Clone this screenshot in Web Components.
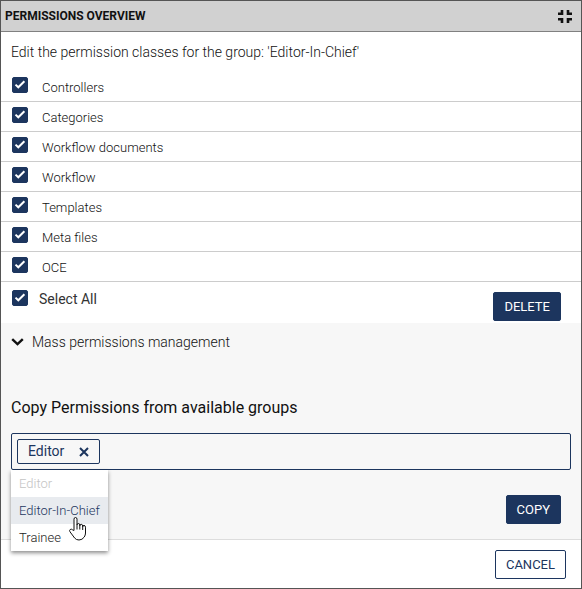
<!DOCTYPE html>
<html lang="en">
<head>
<meta charset="utf-8">
<meta name="viewport" content="width=device-width, initial-scale=1">
<title>Permissions overview</title>
<style>
  :root {
    --navy: #1c355e;
    --text: #111111;
    --line: #cccccc;
    --panel: #f7f7f7;
  }

  body {
    margin: 0;
    font-family: Roboto, "Liberation Sans", sans-serif;
    color: var(--text);
  }
</style>
</head>
<body>

<permissions-dialog heading="Permissions overview">
  <permission-list group="Editor-In-Chief"></permission-list>
  <mass-permissions></mass-permissions>
  <action-button slot="footer" variant="outline">CANCEL</action-button>
</permissions-dialog>

<script>
// Filled or outlined button
class ActionButton extends HTMLElement {
  connectedCallback() {
    this.attachShadow({ mode: 'open' });

    this.shadowRoot.innerHTML = `
      <style>
        :host {
          display: inline-flex;
        }

        button {
          height: 29px;
          padding: 0 10px;
          border: 1px solid var(--navy);
          border-radius: 2px;
          background: var(--navy);
          color: #ffffff;
          font: 400 13px/16px Roboto, "Liberation Sans", sans-serif;
          cursor: pointer;
        }

        :host([variant="outline"]) button {
          background: #ffffff;
          color: var(--navy);
        }
      </style>

      <button type="button"><slot></slot></button>
    `;
  }
}

// Tick box with its label
class CheckRow extends HTMLElement {
  connectedCallback() {
    this.attachShadow({ mode: 'open' });

    this.shadowRoot.innerHTML = `
      <style>
        :host {
          display: block;
        }

        label {
          display: flex;
          align-items: flex-start;
          gap: 14px;
          padding: 5px 11px 2px;
          cursor: pointer;
        }

        .box {
          display: grid;
          flex: none;
        }

        input, svg {
          grid-area: 1 / 1;
          width: 16px;
          height: 16px;
          margin: 0;
        }

        input {
          appearance: none;
          border: 1px solid var(--navy);
          border-radius: 2px;
          background: #ffffff;
        }

        input:checked {
          background: var(--navy);
        }

        svg {
          pointer-events: none;
          visibility: hidden;
        }

        input:checked + svg {
          visibility: visible;
        }

        .text {
          font-size: 13px;
          font-weight: 300;
          line-height: 22px;
        }

        :host([large]) label {
          gap: 11px;
          padding: 8px 11px;
        }

        :host([large]) .text {
          color: #333333;
          font-size: 14px;
          font-weight: 400;
          line-height: 18px;
        }
      </style>

      <label>
        <span class="box">
          <input type="checkbox" checked>
          <svg viewBox="0 0 16 16" aria-hidden="true">
            <path d="M3.5 7.6 6.3 10.3 12.4 4.3" fill="none" stroke="#fff" stroke-width="2"/>
          </svg>
        </span>
        <span class="text"><slot></slot></span>
      </label>
    `;
  }
}

class PermissionList extends HTMLElement {
  connectedCallback() {
    const classes = ['Controllers', 'Categories', 'Workflow documents', 'Workflow', 'Templates', 'Meta files', 'OCE'];

    this.attachShadow({ mode: 'open' });

    this.shadowRoot.innerHTML = `
      <style>
        :host {
          display: block;
        }

        p {
          margin: 0;
          padding: 10px;
          font-size: 14px;
          font-weight: 300;
          line-height: 20px;
        }

        ul {
          margin: 0;
          padding: 0;
          list-style: none;
        }

        li {
          border-bottom: 1px solid var(--line);
        }

        .actions {
          display: flex;
          justify-content: space-between;
          align-items: flex-start;
        }

        action-button {
          margin: 10px 20px 2px 0;
        }
      </style>

      <p>Edit the permission classes for the group: '${this.getAttribute('group')}'</p>
      <ul>
        ${classes.map((name) => `<li><check-row>${name}</check-row></li>`).join('')}
      </ul>
      <div class="actions">
        <check-row large class="all">Select All</check-row>
        <action-button>DELETE</action-button>
      </div>
    `;

    this._bindSelectAll();
  }

  _bindSelectAll() {
    const all = this.shadowRoot.querySelector('.all').shadowRoot.querySelector('input');
    const boxes = [...this.shadowRoot.querySelectorAll('li check-row')]
      .map((row) => row.shadowRoot.querySelector('input'));

    all.addEventListener('change', () => {
      boxes.forEach((box) => { box.checked = all.checked; });
    });
    boxes.forEach((box) => box.addEventListener('change', () => {
      all.checked = boxes.every((item) => item.checked);
    }));
  }
}

// Box with chips for the chosen groups, and the menu of groups below it
class GroupPicker extends HTMLElement {
  connectedCallback() {
    this.attachShadow({ mode: 'open' });

    this.shadowRoot.innerHTML = `
      <style>
        :host {
          display: block;
          position: relative;
        }

        .field {
          display: flex;
          gap: 8px;
          padding: 5px;
          border: 1px solid var(--navy);
          border-radius: 2px;
        }

        .chip {
          display: flex;
          gap: 14px;
          height: 23px;
          padding: 0 9px 0 10px;
          border: 1px solid var(--navy);
          border-radius: 2px;
          color: var(--navy);
          font-size: 14px;
          line-height: 22px;
        }

        button {
          border: 0;
          padding: 0;
          background: none;
          color: inherit;
          font: inherit;
          cursor: pointer;
        }

        .remove {
          display: flex;
          align-items: center;
        }

        input {
          flex: 1;
          min-width: 0;
          border: 0;
          padding: 0;
          outline: 0;
          background: none;
          font: inherit;
        }

        .menu {
          position: absolute;
          top: 100%;
          left: 0;
          background: #ffffff;
          box-shadow: 0 2px 4px rgba(0, 0, 0, 0.45);
        }

        .menu button {
          display: block;
          width: 100%;
          padding: 0 8px;
          color: #222222;
          font-size: 13px;
          font-weight: 300;
          line-height: 27px;
          text-align: left;
        }

        .menu button:disabled {
          color: #c4c4c4;
          cursor: default;
        }

        .menu button.active {
          background: #e8ebef;
          color: var(--navy);
        }

        .pointer {
          position: absolute;
          top: 46px;
          left: 57px;
          pointer-events: none;
        }
      </style>

      <div class="field">
        <span class="chip">Editor
          <button class="remove" type="button" aria-label="Remove">
            <svg width="12" height="12" viewBox="0 0 12 12" aria-hidden="true">
              <path d="M2 2 10 10M10 2 2 10" stroke="currentColor" stroke-width="2"/>
            </svg>
          </button>
        </span>
        <input type="text" aria-label="Groups">
      </div>
      <div class="menu" role="listbox">
        <button type="button" role="option" disabled>Editor</button>
        <button type="button" role="option" class="active">Editor-In-Chief</button>
        <button type="button" role="option">Trainee</button>
        <svg class="pointer" width="20" height="26" viewBox="0 0 20 26" aria-hidden="true">
          <path d="M6 14.5V3.2Q6 1.5 7.5 1.5T9 3.2V9Q9 7.5 10.4 7.5T11.8 9V10Q11.8 8.3 13.2 8.3T14.7 10V11Q14.7 9.4 16 9.4T17.5 11.2V17Q17.5 19 16.3 21Q14.2 24 11 24Q8.2 24 6.6 22L2 15.8Q1 14.3 2.2 13.5T4.5 13.8Z"
            fill="#fff" stroke="#111" stroke-width="1" stroke-linejoin="round"/>
          <path d="M9 9V13.5M11.8 10V13.5M14.7 11V14" fill="none" stroke="#111"/>
        </svg>
      </div>
    `;
  }
}

class MassPermissions extends HTMLElement {
  connectedCallback() {
    this.attachShadow({ mode: 'open' });

    this.shadowRoot.innerHTML = `
      <style>
        :host {
          display: block;
          flex: 1;
          padding: 9px 10px 15px;
          background: var(--panel);
        }

        .toggle {
          display: flex;
          align-items: center;
          gap: 8px;
          border: 0;
          padding: 0;
          background: none;
          color: inherit;
          font: 300 14px/20px Roboto, "Liberation Sans", sans-serif;
          cursor: pointer;
        }

        h2 {
          margin: 46px 0 15px;
          font-size: 16px;
          font-weight: 400;
          line-height: 20px;
        }

        .actions {
          display: flex;
          justify-content: flex-end;
          padding: 25px 10px 0;
        }
      </style>

      <button class="toggle" type="button" aria-expanded="true">
        <svg width="13" height="8" viewBox="0 0 13 8" aria-hidden="true">
          <path d="M1.2 1.2 6.5 6.2 11.8 1.2" fill="none" stroke="#111" stroke-width="2.4"/>
        </svg>
        Mass permissions management
      </button>
      <div class="content">
        <h2>Copy Permissions from available groups</h2>
        <group-picker></group-picker>
        <div class="actions">
          <action-button>COPY</action-button>
        </div>
      </div>
    `;

    const toggle = this.shadowRoot.querySelector('.toggle');
    const content = this.shadowRoot.querySelector('.content');
    toggle.addEventListener('click', () => {
      content.hidden = !content.hidden;
      toggle.setAttribute('aria-expanded', String(!content.hidden));
    });
  }
}

class PermissionsDialog extends HTMLElement {
  connectedCallback() {
    this.attachShadow({ mode: 'open' });

    this.shadowRoot.innerHTML = `
      <style>
        :host {
          display: flex;
          flex-direction: column;
          box-sizing: border-box;
          min-height: 100vh;
          border: 1px solid #555555;
          background: #ffffff;
        }

        header {
          display: flex;
          justify-content: space-between;
          align-items: center;
          height: 30px;
          padding: 0 9px 0 4px;
          border-bottom: 1px solid #808080;
          background: #d1d1d1;
        }

        h1 {
          margin: 0;
          font-size: 12px;
          font-weight: 700;
          line-height: 16px;
          text-transform: uppercase;
        }

        header button {
          display: flex;
          border: 0;
          padding: 0;
          background: none;
          cursor: pointer;
        }

        footer {
          display: flex;
          justify-content: flex-end;
          padding: 10px 15px 9px;
          border-top: 1px solid #dddddd;
        }
      </style>

      <header>
        <h1>${this.getAttribute('heading')}</h1>
        <button type="button" aria-label="Exit full screen">
          <svg width="14" height="13" viewBox="0 0 14 13" aria-hidden="true">
            <path d="M0 3.8H4V0M10 0V3.8H14M14 9.2H10V13M4 13V9.2H0" fill="none" stroke="#111" stroke-width="2.6"/>
          </svg>
        </button>
      </header>
      <slot></slot>
      <footer><slot name="footer"></slot></footer>
    `;
  }
}

customElements.define('action-button', ActionButton);
customElements.define('check-row', CheckRow);
customElements.define('permission-list', PermissionList);
customElements.define('group-picker', GroupPicker);
customElements.define('mass-permissions', MassPermissions);
customElements.define('permissions-dialog', PermissionsDialog);
</script>
</body>
</html>
